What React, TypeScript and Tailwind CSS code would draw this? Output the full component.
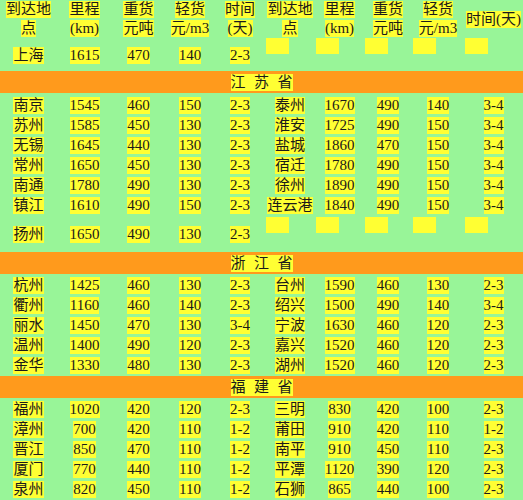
import React from "react";

type Row = string[];

const jiangsu: Row[] = [
  ["南京", "1545", "460", "150", "2-3", "泰州", "1670", "490", "140", "3-4"],
  ["苏州", "1585", "450", "130", "2-3", "淮安", "1725", "490", "150", "3-4"],
  ["无锡", "1645", "440", "130", "2-3", "盐城", "1860", "470", "150", "3-4"],
  ["常州", "1650", "450", "130", "2-3", "宿迁", "1780", "490", "150", "3-4"],
  ["南通", "1780", "490", "130", "2-3", "徐州", "1890", "490", "150", "3-4"],
  ["镇江", "1610", "490", "150", "2-3", "连云港", "1840", "490", "150", "3-4"],
];

const zhejiang: Row[] = [
  ["杭州", "1425", "460", "130", "2-3", "台州", "1590", "460", "130", "2-3"],
  ["衢州", "1160", "460", "140", "2-3", "绍兴", "1500", "490", "140", "3-4"],
  ["丽水", "1450", "470", "130", "3-4", "宁波", "1630", "460", "120", "2-3"],
  ["温州", "1400", "490", "120", "2-3", "嘉兴", "1520", "460", "120", "2-3"],
  ["金华", "1330", "480", "130", "2-3", "湖州", "1520", "460", "120", "2-3"],
];

const fujian: Row[] = [
  ["福州", "1020", "420", "120", "2-3", "三明", "830", "420", "100", "2-3"],
  ["漳州", "700", "420", "110", "1-2", "莆田", "910", "420", "110", "1-2"],
  ["晋江", "850", "470", "110", "1-2", "南平", "910", "450", "110", "2-3"],
  ["厦门", "770", "440", "110", "1-2", "平潭", "1120", "390", "120", "2-3"],
  ["泉州", "820", "450", "110", "1-2", "石狮", "865", "440", "100", "2-3"],
];

const grid =
  "grid grid-cols-[57px_55px_53px_50px_50px_50px_49px_48px_52px_59px]";

const Mark = ({ children }: { children: React.ReactNode }) => (
  <span className="inline-block h-[17px] leading-[17px] bg-[#ffff33] whitespace-nowrap">
    {children}
  </span>
);

const EmptyBox = () => (
  <div className="flex items-start justify-start pl-[1px]">
    <span className="block w-[23px] h-[16px] bg-[#ffff33]" />
  </div>
);

const DataRow = ({ row }: { row: Row }) => (
  <div className={`${grid} h-[20px]`}>
    {row.map((v, i) => (
      <div key={i} className="flex items-center justify-center">
        <Mark>{v}</Mark>
      </div>
    ))}
  </div>
);

const ProvinceBar = ({ name }: { name: string }) => (
  <div className="h-[22px] bg-[#ff9a1c] flex items-center justify-center">
    <span className="w-[62px] h-[17px] leading-[17px] bg-[#ffff33] flex justify-between">
      {name.split("").map((c, i) => (
        <span key={i}>{c}</span>
      ))}
    </span>
  </div>
);

const HeadCell = ({ lines }: { lines: string[] }) => (
  <div className="flex flex-col items-center justify-center gap-[2px]">
    {lines.map((l, i) => (
      <Mark key={i}>{l}</Mark>
    ))}
  </div>
);

export default function App() {
  const heads = [
    ["到达地", "点"],
    ["里程", "(km)"],
    ["重货", "元吨"],
    ["轻货", "元/m3"],
  ];
  return (
    <div
      className="w-[523px] h-[500px] overflow-hidden bg-[#98f598] text-[15px] text-[#1a1a1a]"
      style={{ fontFamily: '"Liberation Serif", "Noto Sans CJK SC", serif' }}
    >
      {/* table head */}
      <div className={`${grid} h-[38px]`}>
        {heads.map((h, i) => (
          <HeadCell key={i} lines={h} />
        ))}
        <HeadCell lines={["时间", "(天)"]} />
        {heads.map((h, i) => (
          <HeadCell key={"r" + i} lines={h} />
        ))}
        <HeadCell lines={["时间(天)"]} />
      </div>

      {/* 上海 */}
      <div className={`${grid} h-[33px]`}>
        {["上海", "1615", "470", "140", "2-3"].map((v, i) => (
          <div key={i} className="flex items-center justify-center pt-[1px]">
            <Mark>{v}</Mark>
          </div>
        ))}
        {[0, 1, 2, 3, 4].map((i) => (
          <EmptyBox key={i} />
        ))}
      </div>

      <ProvinceBar name="江苏省" />
      <div className="h-[2px]" />
      {jiangsu.map((r, i) => (
        <DataRow key={i} row={r} />
      ))}
      <div className={`${grid} h-[37px] pt-[2px]`}>
        {["扬州", "1650", "490", "130", "2-3"].map((v, i) => (
          <div key={i} className="flex items-center justify-center">
            <Mark>{v}</Mark>
          </div>
        ))}
        {[0, 1, 2, 3, 4].map((i) => (
          <EmptyBox key={i} />
        ))}
      </div>

      <ProvinceBar name="浙江省" />
      <div className="h-[1px]" />
      {zhejiang.map((r, i) => (
        <DataRow key={i} row={r} />
      ))}
      <div className="h-[1px]" />
      <ProvinceBar name="福建省" />
      <div className="h-[1px]" />
      {fujian.map((r, i) => (
        <DataRow key={i} row={r} />
      ))}
    </div>
  );
}
